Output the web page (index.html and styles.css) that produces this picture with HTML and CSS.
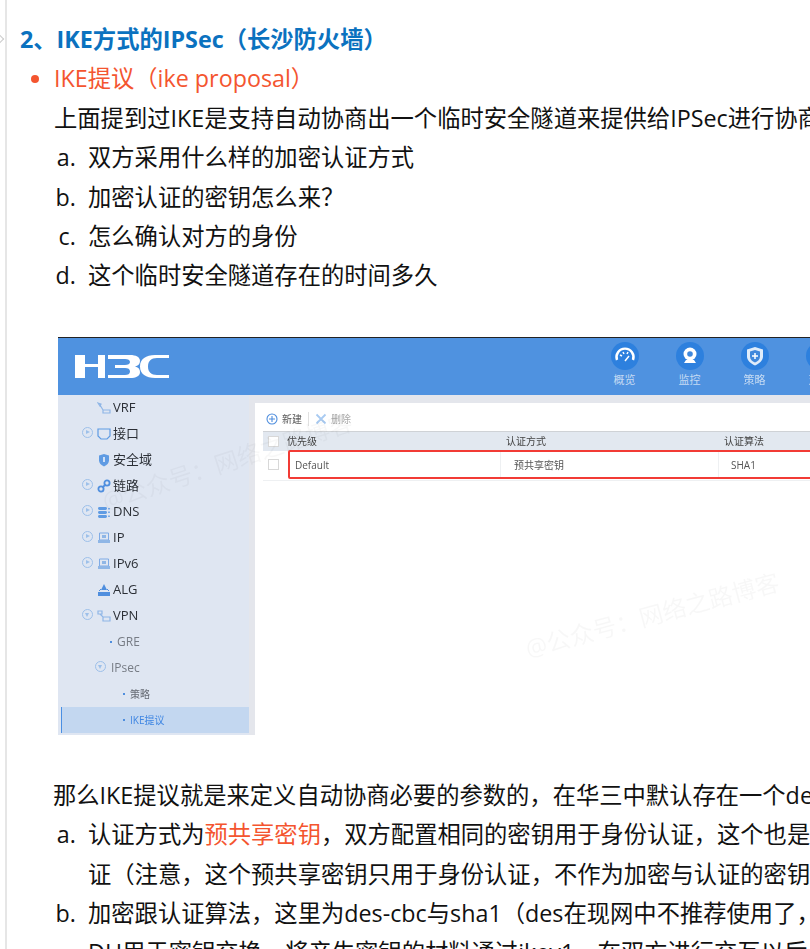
FILE: index.html
```html
<!DOCTYPE html>
<html lang="zh-CN">
<head>
<meta charset="utf-8">
<title>IKE方式的IPSec</title>
<link rel="stylesheet" href="styles.css">
</head>
<body>
<span class="fold-mark"></span>
<main class="article">
  <h2 class="heading">2、IKE方式的IPSec（长沙防火墙）</h2>
  <ul class="bullets">
    <li>IKE提议（ike proposal）</li>
  </ul>
  <p class="para">上面提到过IKE是支持自动协商出一个临时安全隧道来提供给IPSec进行协商的</p>
  <ol class="alpha">
    <li>双方采用什么样的加密认证方式</li>
    <li>加密认证的密钥怎么来？</li>
    <li>怎么确认对方的身份</li>
    <li>这个临时安全隧道存在的时间多久</li>
  </ol>

  <figure class="shot">
    <header class="shot-top">
      <svg class="logo" viewBox="0 0 94 23" aria-label="H3C"><path fill="#fff" d="M0 0h10v9h13V0h7v23h-7V12H10v11H0zM33 0h22c6 0 10 2 10 6 0 3-2 5-5 5.500 3 .5 5 2.500 5 5.500 0 4-4 6-10 6H33v-3h17c3 0 5-1 5-3.500S53 13 50 13H40v-3h10c3 0 5-1 5-3s-2-3-5-3H33zM94 0v3H82c-6 0-9 3-9 8.500S76 20 82 20h12v3H80c-9 0-15-4-15-11.500S71 0 80 0z"/></svg>
      <nav class="top-nav">
        <div class="nav-item"><span class="nav-disc"><svg viewBox="0 0 28 28"><path d="M6 18a8.500 8.500 0 1 1 16 0" fill="none" stroke="#fff" stroke-width="2.400"/><path d="M9 13l2 1M12 10l1 2M17 10l-1 2M14 19l4-5" stroke="#fff" stroke-width="1.500" fill="none"/></svg></span><span class="nav-label">概览</span></div>
        <div class="nav-item"><span class="nav-disc"><svg viewBox="0 0 28 28"><circle cx="14" cy="12" r="6.500" fill="#fff"/><circle cx="14" cy="12" r="2.800" fill="#3f88dc"/><path d="M8 21h12l-2-3h-8z" fill="#fff"/></svg></span><span class="nav-label">监控</span></div>
        <div class="nav-item"><span class="nav-disc"><svg viewBox="0 0 28 28"><path d="M14 5l8 2.500v7c0 4-3.500 7-8 9-4.500-2-8-5-8-9v-7z" fill="#fff" fill-opacity=".85"/><path d="M14 8l5 1.500v5c0 3-2.200 4.800-5 6-2.800-1.200-5-3-5-6v-5z" fill="#3f88dc"/><path d="M14 11v6M11 14h6" stroke="#fff" stroke-width="1.500"/></svg></span><span class="nav-label">策略</span></div>
        <div class="nav-item"><span class="nav-disc"></span><span class="nav-label">对象</span></div>
      </nav>
    </header>
    <div class="shot-body">
      <aside class="side">
        <div class="side-row"><span class="exp"></span><svg class="ico" viewBox="0 0 14 14"><path d="M1 2l3 1-1 2zM3 4l3 5h7v3H6V9" fill="none" stroke="#8fb6e6" stroke-width="1.200"/></svg><span class="side-text">VRF</span></div>
        <div class="side-row"><span class="exp"><i></i></span><svg class="ico" viewBox="0 0 14 14"><path d="M1 2h12v7l-3 3H4L1 9z" fill="none" stroke="#5f9be3" stroke-width="1.200"/></svg><span class="side-text">接口</span></div>
        <div class="side-row"><span class="exp"></span><svg class="ico" viewBox="0 0 14 14"><path d="M7 1l5 1.500v5C12 10 10 12 7 13.500 4 12 2 10 2 7.500v-5z" fill="#5f9be3"/><path d="M6 4h2v5H6z" fill="#cfe0f6"/></svg><span class="side-text">安全域</span></div>
        <div class="side-row"><span class="exp"><i></i></span><svg class="ico" viewBox="0 0 14 14"><circle cx="4" cy="10" r="2.600" fill="none" stroke="#4f8ede" stroke-width="1.800"/><circle cx="10" cy="4" r="2.600" fill="none" stroke="#4f8ede" stroke-width="1.800"/><path d="M5.500 8.500l3-3" stroke="#4f8ede" stroke-width="1.800"/></svg><span class="side-text">链路</span></div>
        <div class="side-row"><span class="exp"><i></i></span><svg class="ico" viewBox="0 0 14 14"><rect x="1" y="2" width="9" height="3" rx="1.400" fill="#5f9be3"/><rect x="1" y="6" width="9" height="3" rx="1.400" fill="#5f9be3"/><rect x="1" y="10" width="9" height="3" rx="1.400" fill="#5f9be3"/><path d="M12 3v1.500M12 6.500V8M12 10.500V12" stroke="#5f9be3" stroke-width="1.500"/></svg><span class="side-text">DNS</span></div>
        <div class="side-row"><span class="exp"><i></i></span><svg class="ico" viewBox="0 0 14 14"><path d="M2.500 2h9v7h-9z" fill="none" stroke="#7fabe6"/><rect x="1" y="9" width="12" height="3" fill="#8fb6e6"/><rect x="5" y="4" width="4" height="3" fill="#8fb6e6"/></svg><span class="side-text">IP</span></div>
        <div class="side-row"><span class="exp"><i></i></span><svg class="ico" viewBox="0 0 14 14"><path d="M2.500 2h9v7h-9z" fill="none" stroke="#7fabe6"/><rect x="1" y="9" width="12" height="3" fill="#8fb6e6"/><rect x="5" y="4" width="4" height="3" fill="#8fb6e6"/></svg><span class="side-text">IPv6</span></div>
        <div class="side-row"><span class="exp"></span><svg class="ico" viewBox="0 0 14 14"><path d="M7 1l3 6H4z" fill="#4f8ede"/><path d="M1 9h12v4H1z" fill="#4f8ede"/><path d="M2 8l2-2M12 8l-2-2" stroke="#4f8ede"/></svg><span class="side-text">ALG</span></div>
        <div class="side-row"><span class="exp open"><i></i></span><svg class="ico" viewBox="0 0 14 14"><path d="M1 2h4v3H1zM3 5l3 3h7v4H6V8" fill="none" stroke="#8fb6e6" stroke-width="1.200"/></svg><span class="side-text">VPN</span></div>
        <div class="side-row sub"><span class="dot"></span><span class="sub-text">GRE</span></div>
        <div class="side-row sub-open"><span class="exp open"><i></i></span><span class="sub-text">IPsec</span></div>
        <div class="side-row leaf"><span class="dot"></span><span class="leaf-text">策略</span></div>
        <div class="side-row leaf active"><span class="dot"></span><span class="leaf-text">IKE提议</span></div>
      </aside>
      <section class="panel">
        <div class="toolbar">
          <svg class="tool-ico" viewBox="0 0 12 12"><circle cx="6" cy="6" r="5" fill="none" stroke="#4f8ede" stroke-width="1.100"/><path d="M6 3v6M3 6h6" stroke="#4f8ede" stroke-width="1.100"/></svg>
          <span class="tool-text">新建</span>
          <span class="tool-sep"></span>
          <svg class="tool-ico" viewBox="0 0 12 12"><path d="M1.500 1.500l9 9M10.500 1.500l-9 9" stroke="#a9cbf2" stroke-width="1.800"/></svg>
          <span class="tool-text off">删除</span>
        </div>
        <div class="thead">
          <span class="check-cell"><span class="check"></span></span>
          <span class="th th1">优先级</span>
          <span class="th th2">认证方式</span>
          <span class="th">认证算法</span>
        </div>
        <div class="tbody-row">
          <span class="check-cell"><span class="check"></span></span>
          <div class="picked">
            <span class="td td1">Default</span>
            <span class="td td2">预共享密钥</span>
            <span class="td td3">SHA1</span>
          </div>
        </div>
      </section>
    </div>
    <span class="mark mark-a">@公众号：网络之路博客</span>
    <span class="mark mark-b">@公众号：网络之路博客</span>
  </figure>

  <p class="para">那么IKE提议就是来定义自动协商必要的参数的，在华三中默认存在一个default</p>
  <ol class="alpha">
    <li>认证方式为<span class="hot">预共享密钥</span>，双方配置相同的密钥用于身份认证，这个也是经常用的<br>证（注意，这个预共享密钥只用于身份认证，不作为加密与认证的密钥）</li>
    <li>加密跟认证算法，这里为des-cbc与sha1（des在现网中不推荐使用了，<br>DH用于密钥交换，将产生密钥的材料通过ikev1，在双方进行交互以后</li>
  </ol>
</main>
</body>
</html>
```
FILE: styles.css
```css
html, body {
  margin: 0;
  height: 949px;
  overflow: hidden;
  background: #fff;
}
body {
  position: relative;
  font-family: "Open Sans", "Noto Sans CJK SC", sans-serif;
  color: #111;
}
.fold-mark {
  position: absolute;
  left: -3px;
  top: 36px;
  width: 5px;
  height: 5px;
  border-top: 1px solid #ccc;
  border-right: 1px solid #ccc;
  transform: rotate(45deg);
}
.article {
  box-sizing: border-box;
  width: 1100px;
  height: 949px;
  margin-left: 5px;
  padding: 20px 0 0 13px;
  border-left: 2px solid #e6e6e6;
  font-size: 23.3px;
  line-height: 39.4px;
  white-space: nowrap;
}
.heading {
  margin: 0;
  font-size: 23.3px;
  line-height: 39.4px;
  font-weight: 700;
  color: #0b72bf;
}
.bullets {
  margin: 0;
  padding: 0 0 0 34px;
  color: #f4552f;
}
.para {
  margin: 0 0 0 34px;
}
.article > .para:not(:first-of-type) {
  margin-left: 33px;
}
.alpha {
  margin: 0;
  padding: 0 0 0 68px;
  list-style: lower-alpha;
}
.alpha li::marker {
  content: counter(list-item, lower-alpha) ".  ";
}
.hot {
  color: #f4552f;
}
.shot {
  position: relative;
  width: 800px;
  height: 398px;
  margin: 41px 0 41px 38px;
  overflow: hidden;
  display: flex;
  flex-direction: column;
  border-top: 1px solid #222;
  box-sizing: border-box;
  filter: blur(0.35px);
  line-height: 1.2;
}
.shot-top {
  flex: none;
  height: 57px;
  display: flex;
  align-items: flex-start;
  padding-left: 17px;
  background: #4f92e0;
}
.logo {
  flex: none;
  width: 94px;
  height: 23px;
  margin-top: 17px;
}
.top-nav {
  display: flex;
  margin-left: 423px;
}
.nav-item {
  width: 65px;
  display: flex;
  flex-direction: column;
  align-items: center;
}
.nav-disc {
  width: 28px;
  height: 28px;
  margin-top: 4px;
  border-radius: 50%;
  background: #2d80de;
}
.nav-disc svg {
  display: block;
  width: 28px;
  height: 28px;
}
.nav-label {
  margin-top: 2px;
  font-size: 11px;
  line-height: 15px;
  color: #c5daf3;
}
.shot-body {
  flex: 1;
  display: flex;
  min-height: 0;
}
.side {
  flex: none;
  box-sizing: border-box;
  width: 191px;
  padding-top: 0;
  background: #dfe6f2;
}
.side-row {
  box-sizing: border-box;
  height: 26px;
  padding-left: 24px;
  display: flex;
  align-items: center;
}
.exp {
  flex: none;
  position: relative;
  box-sizing: border-box;
  width: 11px;
  height: 11px;
  margin: -3px 4px 0 0;
  border-radius: 50%;
}
.exp:has(i) {
  border: 1.200px solid #9dc0ea;
}
.exp i {
  position: absolute;
  left: 3px;
  top: 2px;
  width: 0;
  height: 0;
  border-left: 4px solid #9dc0ea;
  border-top: 2.500px solid transparent;
  border-bottom: 2.500px solid transparent;
}
.exp.open i {
  left: 2px;
  top: 3px;
  border-top: 4px solid #9dc0ea;
  border-bottom: 0;
  border-left: 2.500px solid transparent;
  border-right: 2.500px solid transparent;
}
.ico {
  flex: none;
  width: 14px;
  height: 14px;
  margin-right: 2px;
}
.side-text {
  font-size: 13px;
  color: #2b2f36;
}
.dot {
  flex: none;
  width: 2px;
  height: 2px;
  background: #4f8ede;
}
.sub {
  padding-left: 52px;
}
.sub-text {
  margin-left: 5px;
  font-size: 12px;
  color: #777c85;
}
.sub-open {
  padding-left: 37px;
}
.sub-open .sub-text {
  margin-left: 1px;
}
.leaf {
  padding-left: 65px;
}
.leaf-text {
  margin-left: 5px;
  font-size: 10px;
  color: #666b74;
}
.active {
  background: #c3d7f0;
  box-shadow: inset 1px 0 0 #4a8fe3;
  margin-left: 3px;
  padding-left: 62px;
}
.active .leaf-text {
  color: #3f86e2;
}
.panel {
  flex: 1;
  margin-left: 6px;
  padding: 0 0 0 8px;
  background: #fff;
  border-top: 8px solid #e4e6ec;
  box-shadow: -6px 0 0 #e4e6ec;
  position: relative;
}
.toolbar {
  box-sizing: border-box;
  height: 28px;
  padding: 4px 0 0 3px;
  display: flex;
  align-items: center;
  font-size: 10px;
}
.tool-ico {
  flex: none;
  width: 12px;
  height: 12px;
  margin-right: 4px;
}
.tool-text {
  color: #555;
}
.tool-text.off {
  color: #a8a8a8;
}
.tool-sep {
  width: 1px;
  height: 14px;
  margin: 0 6px;
  background: #e0e0e0;
}
.thead {
  box-sizing: border-box;
  height: 20px;
  display: flex;
  align-items: center;
  border-top: 1px solid #cfd2d6;
  background: #e2e8f0;
}
.check-cell {
  flex: none;
  width: 24px;
  display: flex;
  padding-left: 5px;
  box-sizing: border-box;
}
.check {
  box-sizing: border-box;
  width: 11px;
  height: 11px;
  background: #fff;
  border: 1px solid #d8d8d8;
}
.th {
  flex: none;
  font-size: 10px;
  color: #444;
}
.th1 {
  width: 219px;
}
.th2 {
  width: 218px;
}
.tbody-row {
  display: flex;
  align-items: center;
  height: 30px;
  margin-top: -1px;
  border-bottom: 1px solid #eef0f2;
}
.tbody-row .check-cell {
  width: 25px;
}
.picked {
  flex: 1;
  height: 29px;
  box-sizing: border-box;
  display: flex;
  border: 2px solid #f23b35;
  border-radius: 2px;
}
.td {
  flex: none;
  box-sizing: border-box;
  display: flex;
  align-items: center;
  font-size: 10px;
  color: #555;
  border-right: 1px solid #eef0f2;
}
.td1 {
  width: 211px;
  padding-left: 5px;
}
.td2 {
  width: 218px;
  padding-left: 13px;
}
.td3 {
  flex: 1;
  padding-left: 12px;
  border-right: 0;
}
.mark {
  position: absolute;
  font-size: 24px;
  letter-spacing: 0;
  color: rgba(0, 0, 0, .03);
  white-space: nowrap;
  transform-origin: 0 50%;
}
.mark-a {
  left: 45px;
  top: 150px;
  transform: rotate(-18deg);
}
.mark-b {
  left: 468px;
  top: 297px;
  transform: rotate(-15deg);
}
```
